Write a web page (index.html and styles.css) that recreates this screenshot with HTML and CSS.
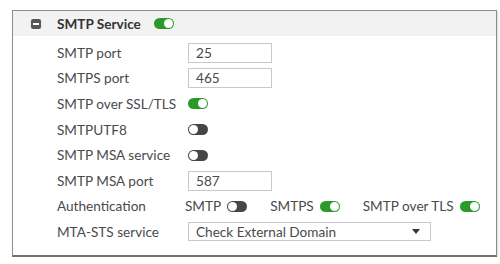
FILE: index.html
```html
<!DOCTYPE html>
<html lang="en">
<head>
    <meta charset="UTF-8">
    <meta name="viewport" content="width=device-width, initial-scale=1.0">
    <title>SMTP Service</title>
    <link rel="stylesheet" href="styles.css">
</head>
<body>
    <div class="panel">
        <!-- Section header -->
        <div class="panel-head">
            <span class="collapse-icon"></span>
            <span class="panel-title">SMTP Service</span>
            <span class="toggle on"></span>
        </div>

        <!-- Settings -->
        <div class="settings">
            <div class="row">
                <span class="label">SMTP port</span>
                <input class="field" type="text" value="25">
            </div>
            <div class="row">
                <span class="label">SMTPS port</span>
                <input class="field" type="text" value="465">
            </div>
            <div class="row">
                <span class="label">SMTP over SSL/TLS</span>
                <span class="toggle on"></span>
            </div>
            <div class="row">
                <span class="label">SMTPUTF8</span>
                <span class="toggle"></span>
            </div>
            <div class="row">
                <span class="label">SMTP MSA service</span>
                <span class="toggle"></span>
            </div>
            <div class="row">
                <span class="label">SMTP MSA port</span>
                <input class="field" type="text" value="587">
            </div>
            <div class="row">
                <span class="label">Authentication</span>
                <div class="auth">
                    <span class="auth-item">SMTP <span class="toggle"></span></span>
                    <span class="auth-item">SMTPS <span class="toggle on"></span></span>
                    <span class="auth-item">SMTP over TLS <span class="toggle on"></span></span>
                </div>
            </div>
            <div class="row">
                <span class="label">MTA-STS service</span>
                <div class="select">
                    <span>Check External Domain</span>
                    <span class="caret"></span>
                </div>
            </div>
        </div>
    </div>
</body>
</html>
```

FILE: styles.css
```css
body {
    font-family: Lato, "Open Sans", sans-serif;
    font-size: 13.6px;
    color: #4a4a4a;
    background-color: #fff;
    margin: 0;
    padding: 10px 3px 0 12px;
}

.panel {
    height: 244px;
    border: 1px solid #8c8c8c;
    border-bottom: 2px solid #6f6f6f;
    box-shadow: 1px 1px 2px rgba(0, 0, 0, 0.15);
}

/* Header band */
.panel-head {
    display: flex;
    align-items: center;
    height: 25px;
    padding-left: 18px;
    background-color: #f2f2f2;
}

.collapse-icon {
    width: 10px;
    height: 10px;
    border-radius: 2px;
    background-color: #555;
    position: relative;
    margin-right: 16px;
}

.collapse-icon::after {
    content: "";
    position: absolute;
    left: 2px;
    right: 2px;
    top: 4px;
    height: 2px;
    background-color: #fff;
}

.panel-title {
    font-weight: bold;
    color: #333;
    margin-right: 13px;
}

/* Toggle switches */
.toggle {
    display: inline-block;
    width: 20px;
    height: 11px;
    border-radius: 6px;
    background-color: #464646;
    position: relative;
    vertical-align: middle;
    flex-shrink: 0;
}

.toggle::after {
    content: "";
    position: absolute;
    top: 1px;
    left: 1px;
    width: 9px;
    height: 9px;
    border-radius: 50%;
    background-color: #fff;
}

.toggle.on {
    background-color: #2b9a2b;
}

.toggle.on::after {
    left: 10px;
}

/* Rows */
.settings {
    padding: 4px 0 0 44px;
}

.row {
    display: flex;
    align-items: center;
    height: 25.6px;
    white-space: nowrap;
}

.label {
    width: 131px;
    flex-shrink: 0;
}

.field {
    width: 84px;
    height: 20px;
    box-sizing: border-box;
    border: 1px solid #c8c8c8;
    padding: 0 7px;
    font-family: inherit;
    font-size: 13.6px;
    color: #4a4a4a;
    margin: 0;
}

.auth {
    display: flex;
    align-items: center;
    margin-left: -3px;
}

.auth-item {
    display: flex;
    align-items: center;
    flex-shrink: 0;
    gap: 6px;
    margin-right: 23px;
}

.auth-item:last-child {
    margin-right: 0;
}

.select {
    display: flex;
    align-items: center;
    justify-content: space-between;
    width: 243px;
    height: 19px;
    box-sizing: border-box;
    border: 1px solid #c8c8c8;
    padding: 0 10px 0 7px;
}

.caret {
    width: 0;
    height: 0;
    border-left: 4px solid transparent;
    border-right: 4px solid transparent;
    border-top: 5px solid #333;
}
```
